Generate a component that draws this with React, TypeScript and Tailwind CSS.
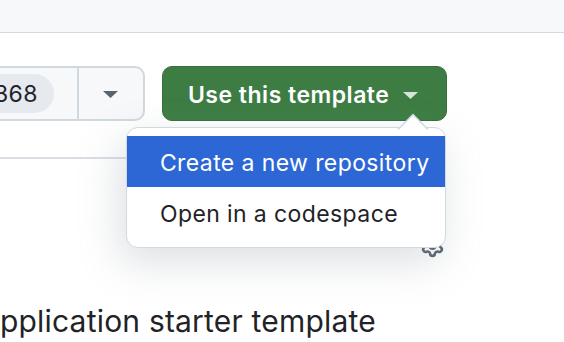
import { Settings } from "lucide-react";

const Caret = ({ className }: { className: string }) => (
    <svg className={className} width="15" height="7" viewBox="0 0 15 7">
        <path d="M0 0h15L7.5 7z" fill="currentColor" />
    </svg>
);

const TemplateMenu = () => {
    return (
        <div className="absolute left-[-36px] top-[61px] w-[320px] h-[121px] bg-white border border-[#d1d9e0] rounded-[12px] shadow-[-6px_14px_40px_rgba(140,149,159,0.3)] z-10">
            <svg className="absolute left-[269px] top-[-15px]" width="34" height="17" viewBox="0 0 34 17">
                <path d="M2 16.5L17 1.5L32 16.5" fill="white" stroke="#d1d9e0" strokeWidth="1.5" />
                <rect x="3" y="16" width="28" height="2" fill="white" />
            </svg>
            <div className="pt-[8px] pb-[8px] flex flex-col">
                <div className="h-[51px] bg-[#2d67d6] text-white flex items-center pl-[33px] pt-[3px] text-[23px] tracking-[0.4px]">
                    Create a new repository
                </div>
                <div className="h-[51px] text-[#1f2328] flex items-center pl-[33px] pt-[3px] text-[23px] tracking-[0.4px]">
                    Open in a codespace
                </div>
            </div>
        </div>
    );
};

export default function App() {
    return (
        <div className="w-[564px] h-[342px] overflow-hidden bg-white font-['Inter','Noto_Sans',sans-serif]">
            <div className="h-[33px] bg-[#f6f8fa] border-b border-[#d1d9e0]" />

            <div className="flex items-start mt-[33px]">
                <div className="flex h-[55px] ml-[-38px] border-2 border-[#d1d9e0] rounded-[10px] bg-[#f6f8fa]">
                    <div className="flex items-center pl-[14px] pr-[23px]">
                        <span className="h-[39px] px-[16px] pt-[2px] flex items-center rounded-full bg-[#e6eaef] text-[23px] tracking-[0.4px] text-[#1f2328]">
                            368
                        </span>
                    </div>
                    <div className="w-[66px] border-l-2 border-[#d1d9e0] flex items-center justify-center">
                        <Caret className="text-[#59636e] mt-[2px]" />
                    </div>
                </div>

                <div className="relative ml-[17px]">
                    <button className="w-[285px] h-[55px] rounded-[10px] bg-[#3d7d43] border border-[#376f3c] text-white text-[23px] tracking-[0.5px] font-semibold flex items-center pl-[25px] pt-[3px]">
                        Use this template
                        <Caret className="ml-[14px] text-[#d6e4d7]" />
                    </button>
                    <TemplateMenu />
                </div>
            </div>

            <div className="w-[320px] h-[2px] bg-[#d8dee4] mt-[36px]" />

            <div className="h-[144px] pl-[420px] pt-[74px]">
                <Settings size={25} strokeWidth={2.5} className="text-[#59636e]" />
            </div>

            <h1 className="ml-[-21px] text-[30px] leading-[36px] tracking-[0.2px] text-[#1f2328] whitespace-nowrap">
                Application starter template
            </h1>
        </div>
    );
}
